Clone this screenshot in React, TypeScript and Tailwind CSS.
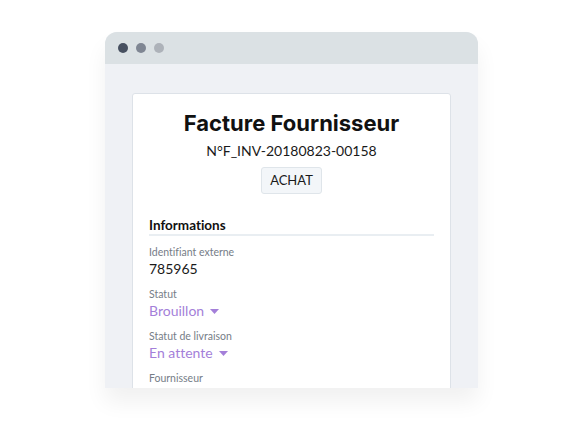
const Caret = () => (
  <svg width="9" height="5" viewBox="0 0 9 5" className="ml-[6px] mt-[1px]">
    <path d="M0 0h9L4.5 5z" fill="#a47fd9" />
  </svg>
);

const Field = ({ label, value, select }: { label: string; value: string; select?: boolean }) => (
  <div className="flex flex-col mt-[9px]">
    <span className="text-[10.5px] leading-[14px] text-[#767d87]">{label}</span>
    {select ? (
      <span className="flex items-center mt-[1px] text-[14px] leading-[18px] text-[#a47fd9]">
        {value}
        <Caret />
      </span>
    ) : (
      <span className="mt-[1px] text-[14px] leading-[18px] text-[#1a1a1a]">{value}</span>
    )}
  </div>
);

const App: React.FC = () => {
  return (
    <div className="w-[571px] h-[431px] bg-white pt-[32px] pl-[105px] font-['Lato',sans-serif] [font-variant-ligatures:none]">
      <div className="w-[373px] h-[356px] rounded-t-[12px] overflow-hidden flex flex-col bg-[#eff1f5] shadow-[0_14px_22px_rgba(0,0,0,0.06)]">
        <div className="h-[32px] shrink-0 bg-[#dbe1e4] flex items-center gap-[8px] pl-[13px]">
          <span className="w-[10px] h-[10px] rounded-full bg-[#475060]" />
          <span className="w-[10px] h-[10px] rounded-full bg-[#7f8693]" />
          <span className="w-[10px] h-[10px] rounded-full bg-[#adb2b9]" />
        </div>
        <div className="flex-1 px-[27px] pt-[29px]">
          <div className="bg-white border border-[#dde2e8] rounded-t-[3px] h-[400px] pt-[15px] px-[16px] flex flex-col">
            <h1 className="text-center text-[22px] leading-[28px] font-bold text-[#111] font-['Inter',sans-serif]">
              Facture Fournisseur
            </h1>
            <p className="mt-[4px] text-center text-[14px] leading-[20px] text-[#1a1a1a]">N°F_INV-20180823-00158</p>
            <div className="mt-[6px] flex justify-center">
              <span className="h-[27px] w-[61px] flex items-center justify-center text-[13px] text-[#1a1a1a] bg-[#f3f6f9] border border-[#dfe5ea] rounded-[3px]">
                ACHAT
              </span>
            </div>
            <h2 className="mt-[22px] text-[13.5px] leading-[18px] font-bold text-[#111] border-b-2 border-[#e9eef2]">
              Informations
            </h2>
            <Field label="Identifiant externe" value="785965" />
            <Field label="Statut" value="Brouillon" select />
            <Field label="Statut de livraison" value="En attente" select />
            <Field label="Fournisseur" value="" />
          </div>
        </div>
      </div>
    </div>
  );
};

export default App;
